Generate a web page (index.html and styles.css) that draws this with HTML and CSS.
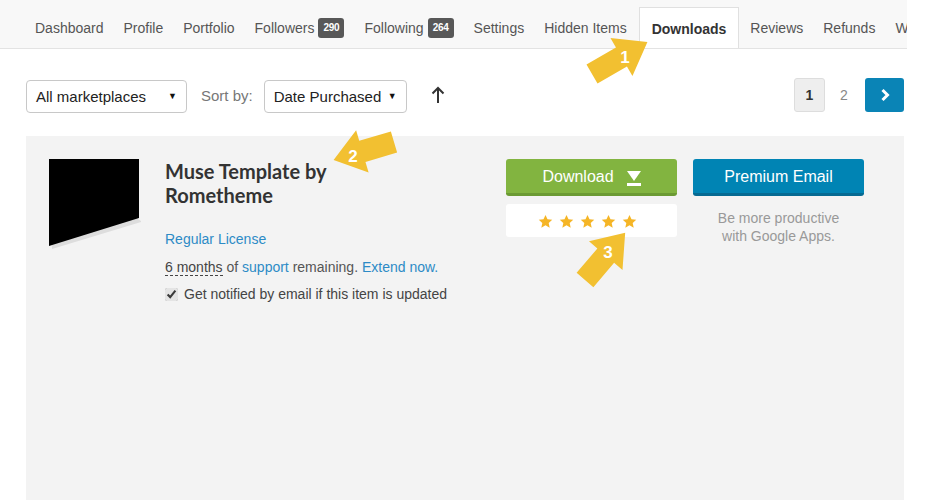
FILE: index.html
```html
<!DOCTYPE html>
<html>
<head>
<meta charset="utf-8">
<link rel="stylesheet" href="styles.css">
</head>
<body>
<div class="page">
  <nav class="tabs">
    <a class="tab">Dashboard</a>
    <a class="tab">Profile</a>
    <a class="tab">Portfolio</a>
    <a class="tab">Followers <span class="badge">290</span></a>
    <a class="tab">Following <span class="badge">264</span></a>
    <a class="tab">Settings</a>
    <a class="tab">Hidden Items</a>
    <a class="tab active">Downloads</a>
    <a class="tab">Reviews</a>
    <a class="tab">Refunds</a>
    <a class="tab">Withdrawals</a>
  </nav>

  <main class="main">
    <div class="toolbar">
      <div class="select sel-market"><span>All marketplaces</span><span class="caret">&#9660;</span></div>
      <span class="sort-label">Sort by:</span>
      <div class="select sel-sort"><span>Date Purchased</span><span class="caret">&#9660;</span></div>
      <svg class="sort-dir" width="14" height="18" viewBox="0 0 14 18"><path d="M7 17V2M1.5 7.5L7 2l5.5 5.5" fill="none" stroke="#333" stroke-width="2"/></svg>
      <div class="pager">
        <span class="pg current">1</span>
        <span class="pg">2</span>
        <span class="pg next"><svg width="10" height="14" viewBox="0 0 10 14"><path d="M2.5 2l5 5-5 5" fill="none" stroke="#fff" stroke-width="3"/></svg></span>
      </div>
    </div>

    <section class="item">
      <svg class="thumb" width="96" height="96" viewBox="0 0 96 96"><polygon points="0,3 3,90 92,63 92,62" fill="#ddd"/><polygon points="0,0 90,0 90,59 0,87" fill="#000"/></svg>
      <div class="info">
        <h2 class="title">Muse Template by Rometheme</h2>
        <a class="link license">Regular License</a>
        <p class="support"><span class="dotted">6 months</span> of <a class="link">support</a> remaining. <a class="link">Extend now.</a></p>
        <label class="notify"><input type="checkbox" checked> Get notified by email if this item is updated</label>
      </div>
      <div class="actions">
        <a class="btn btn-green">Download <svg class="dl-icon" width="14" height="16" viewBox="0 0 14 16"><polygon points="0,1 14,1 7,11" fill="#fff"/><rect x="0" y="13" width="14" height="3" fill="#fff"/></svg></a>
        <div class="rating">
          <svg width="15" height="15" viewBox="0 0 24 24"><path d="M12 1.5l3.2 7 7.6.8-5.7 5.1 1.6 7.5L12 18l-6.7 3.9 1.6-7.5L1.2 9.3l7.6-.8z" fill="#f5b526"/></svg>
          <svg width="15" height="15" viewBox="0 0 24 24"><path d="M12 1.5l3.2 7 7.6.8-5.7 5.1 1.6 7.5L12 18l-6.7 3.9 1.6-7.5L1.2 9.3l7.6-.8z" fill="#f5b526"/></svg>
          <svg width="15" height="15" viewBox="0 0 24 24"><path d="M12 1.5l3.2 7 7.6.8-5.7 5.1 1.6 7.5L12 18l-6.7 3.9 1.6-7.5L1.2 9.3l7.6-.8z" fill="#f5b526"/></svg>
          <svg width="15" height="15" viewBox="0 0 24 24"><path d="M12 1.5l3.2 7 7.6.8-5.7 5.1 1.6 7.5L12 18l-6.7 3.9 1.6-7.5L1.2 9.3l7.6-.8z" fill="#f5b526"/></svg>
          <svg width="15" height="15" viewBox="0 0 24 24"><path d="M12 1.5l3.2 7 7.6.8-5.7 5.1 1.6 7.5L12 18l-6.7 3.9 1.6-7.5L1.2 9.3l7.6-.8z" fill="#f5b526"/></svg>
        </div>
      </div>
      <div class="actions">
        <a class="btn btn-blue">Premium Email</a>
        <p class="promo">Be more productive<br>with Google Apps.</p>
      </div>
    </section>
  </main>
</div>

<svg class="annotations" width="925" height="500" viewBox="0 0 925 500">
  <g fill="#f2c031">
    <polygon transform="translate(592 74) rotate(-30)" points="0,-11 34,-11 34,-22 64,0 34,22 34,11 0,11"/>
    <polygon transform="translate(394 142) rotate(163.5)" points="0,-11 33,-11 33,-22 63,0 33,22 33,11 0,11"/>
    <polygon transform="translate(585 280) rotate(-49.6)" points="0,-11 32,-11 32,-22 62,0 32,22 32,11 0,11"/>
  </g>
  <g class="anno-num" fill="#fff">
    <text x="625" y="63" text-anchor="middle">1</text>
    <text x="353" y="162" text-anchor="middle">2</text>
    <text x="608" y="258" text-anchor="middle">3</text>
  </g>
</svg>
</body>
</html>
```

FILE: styles.css
```css
* { box-sizing: border-box; }
html, body { margin: 0; padding: 0; background: #fff; }
body {
  font-family: "Liberation Sans", Arial, sans-serif;
  font-size: 14px;
  color: #444;
  width: 925px;
  height: 500px;
  overflow: hidden;
  position: relative;
}
a { text-decoration: none; cursor: pointer; }
.page { width: 907px; }

.tabs {
  display: flex;
  align-items: flex-end;
  height: 49px;
  padding-left: 25px;
  background: #f8f8f8;
  border-bottom: 1px solid #e3e3e3;
  overflow: hidden;
  white-space: nowrap;
}
.tab {
  display: flex;
  align-items: center;
  height: 41px;
  padding: 0 10px;
  color: #555;
  font-size: 14px;
  flex-shrink: 0;
}
.tab.active {
  background: #fff;
  border: 1px solid #e0e0e0;
  border-bottom: none;
  margin: 0 1px -1px 2px;
  height: 42px;
  padding: 0 12px 0 12px;
  color: #333;
  font-weight: bold;
}
.badge {
  display: inline-block;
  margin-left: 4px;
  background: #585858;
  color: #fff;
  font-size: 10px;
  font-weight: bold;
  line-height: 20px;
  height: 20px;
  width: 26px;
  text-align: center;
  border-radius: 3px;
  letter-spacing: -0.3px;
}

.main { padding: 0 3px 0 26px; }

.toolbar {
  display: flex;
  align-items: center;
  padding-top: 28px;
  height: 64px;
}
.select {
  display: flex;
  align-items: center;
  justify-content: space-between;
  height: 33px;
  margin-top: 2px;
  padding: 0 9px 0 9px;
  border: 1px solid #c8c8c8;
  border-radius: 4px;
  background: #fff;
  color: #222;
  font-size: 15px;
}
.sel-market { width: 161px; }
.sel-sort { width: 143px; }
.caret { font-size: 9px; color: #111; }
.sort-label {
  margin: 0 11px 0 14px;
  color: #777;
  font-size: 15px;
}
.sort-dir { margin: 0 0 0 24px; }

.pager {
  margin-left: auto;
  display: flex;
  align-items: center;
  gap: 3px;
}
.pg {
  display: flex;
  align-items: center;
  justify-content: center;
  width: 32px;
  height: 34px;
  color: #888;
  font-size: 14px;
  border-radius: 3px;
}
.pg.current {
  width: 31px;
  background: #eee;
  border: 1px solid #ddd;
  color: #333;
  font-weight: bold;
}
.pg.next {
  width: 39px;
  margin-left: 2px;
  background: #0a84b6;
}

.item {
  display: flex;
  align-items: flex-start;
  margin-top: 23px;
  height: 364px;
  padding: 23px 38px 0 23px;
  background: #f3f3f3;
}
.thumb { flex: none; width: 96px; height: 96px; margin-right: 20px; }
.info { width: 325px; flex: none; }
.title {
  margin: 0;
  font-family: Lato, "Liberation Sans", sans-serif;
  font-weight: bold;
  font-size: 20px;
  line-height: 24px;
  color: #333;
  width: 200px;
}
.link { color: #2d8bc6; }
.license { display: block; margin-top: 22px; line-height: 20px; }
.support { margin: 8px 0 0; line-height: 20px; color: #555; }
.dotted { color: #444; border-bottom: 1px dashed #444; }
.notify {
  display: flex;
  align-items: center;
  margin-top: 7px;
  line-height: 20px;
  color: #444;
}
.notify input {
  width: 13px; height: 13px;
  margin: 0 6px 0 0;
  accent-color: #e4e4e4;
}

.actions {
  width: 171px;
  flex: none;
  margin-left: 16px;
}
.btn {
  display: flex;
  align-items: center;
  justify-content: center;
  height: 37px;
  border-radius: 3px;
  color: #fff;
  font-size: 16px;
  padding-top: 1px;
}
.btn-green { background: #82b440; border-bottom: 3px solid #6b9a33; }
.btn-blue { background: #0084b4; border-bottom: 3px solid #066a92; }
.dl-icon { margin-left: 13px; margin-top: 2px; }
.rating {
  display: flex;
  justify-content: center;
  align-items: center;
  gap: 6px;
  height: 33px;
  margin-top: 8px;
  background: #fff;
  border-radius: 3px;
  padding: 1px 8px 0 0;
}
.promo {
  margin: 13px 0 0;
  text-align: center;
  color: #999;
  font-size: 14px;
  line-height: 18px;
}

.annotations {
  position: absolute;
  left: 0;
  top: 0;
  pointer-events: none;
}
.anno-num text {
  font-family: "Liberation Sans", Arial, sans-serif;
  font-size: 17px;
  font-weight: bold;
}
```
